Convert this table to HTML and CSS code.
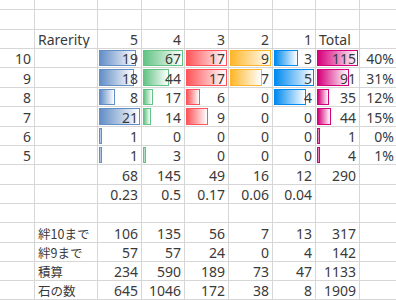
FILE: index.html
```html
<!DOCTYPE html>
<html lang="ja">
<head>
<meta charset="utf-8">
<link rel="stylesheet" href="styles.css">
</head>
<body>
<div class="sheet">
  <!-- row 0 -->
  <div class="c"></div><div class="c"></div><div class="c"></div><div class="c"></div><div class="c"></div><div class="c"></div><div class="c"></div><div class="c"></div><div class="c"></div>
  <!-- row 1 -->
  <div class="c"></div><div class="c"></div><div class="c"></div><div class="c"></div><div class="c"></div><div class="c"></div><div class="c"></div><div class="c"></div><div class="c"></div>
  <!-- header -->
  <div class="c"></div><div class="c l"><span>Rarerity</span></div><div class="c"><span>5</span></div><div class="c"><span>4</span></div><div class="c"><span>3</span></div><div class="c"><span>2</span></div><div class="c"><span>1</span></div><div class="c l"><span>Total</span></div><div class="c"></div>
  <!-- 10 -->
  <div class="c"><span>10</span></div><div class="c"></div>
  <div class="c"><i class="bar b5" style="width:86%"></i><span>19</span></div>
  <div class="c"><i class="bar b4" style="width:95%"></i><span>67</span></div>
  <div class="c"><i class="bar b3" style="width:95%"></i><span>17</span></div>
  <div class="c"><i class="bar b2" style="width:95%"></i><span>9</span></div>
  <div class="c"><i class="bar b1" style="width:57%"></i><span>3</span></div>
  <div class="c"><i class="bar bt" style="width:95%"></i><span>115</span></div>
  <div class="c"><span>40%</span></div>
  <!-- 9 -->
  <div class="c"><span>9</span></div><div class="c"></div>
  <div class="c"><i class="bar b5" style="width:81.4%"></i><span>18</span></div>
  <div class="c"><i class="bar b4" style="width:62.4%"></i><span>44</span></div>
  <div class="c"><i class="bar b3" style="width:95%"></i><span>17</span></div>
  <div class="c"><i class="bar b2" style="width:73.9%"></i><span>7</span></div>
  <div class="c"><i class="bar b1" style="width:95%"></i><span>5</span></div>
  <div class="c"><i class="bar bt" style="width:75.2%"></i><span>91</span></div>
  <div class="c"><span>31%</span></div>
  <!-- 8 -->
  <div class="c"><span>8</span></div><div class="c"></div>
  <div class="c"><i class="bar b5" style="width:36.2%"></i><span>8</span></div>
  <div class="c"><i class="bar b4" style="width:24.1%"></i><span>17</span></div>
  <div class="c"><i class="bar b3" style="width:33.5%"></i><span>6</span></div>
  <div class="c"><span>0</span></div>
  <div class="c"><i class="bar b1" style="width:76%"></i><span>4</span></div>
  <div class="c"><i class="bar bt" style="width:28.9%"></i><span>35</span></div>
  <div class="c"><span>12%</span></div>
  <!-- 7 -->
  <div class="c"><span>7</span></div><div class="c"></div>
  <div class="c"><i class="bar b5" style="width:95%"></i><span>21</span></div>
  <div class="c"><i class="bar b4" style="width:19.9%"></i><span>14</span></div>
  <div class="c"><i class="bar b3" style="width:50.3%"></i><span>9</span></div>
  <div class="c"><span>0</span></div>
  <div class="c"><span>0</span></div>
  <div class="c"><i class="bar bt" style="width:33.3%"></i><span>44</span></div>
  <div class="c"><span>15%</span></div>
  <!-- 6 -->
  <div class="c"><span>6</span></div><div class="c"></div>
  <div class="c"><i class="bar b5" style="width:4.5%"></i><span>1</span></div>
  <div class="c"><span>0</span></div>
  <div class="c"><span>0</span></div>
  <div class="c"><span>0</span></div>
  <div class="c"><span>0</span></div>
  <div class="c"><i class="bar bt" style="width:0.8%"></i><span>1</span></div>
  <div class="c"><span>0%</span></div>
  <!-- 5 -->
  <div class="c"><span>5</span></div><div class="c"></div>
  <div class="c"><i class="bar b5" style="width:4.5%"></i><span>1</span></div>
  <div class="c"><i class="bar b4" style="width:4.3%"></i><span>3</span></div>
  <div class="c"><span>0</span></div>
  <div class="c"><span>0</span></div>
  <div class="c"><span>0</span></div>
  <div class="c"><i class="bar bt" style="width:3.3%"></i><span>4</span></div>
  <div class="c"><span>1%</span></div>
  <!-- sums -->
  <div class="c"></div><div class="c"></div>
  <div class="c"><span>68</span></div><div class="c"><span>145</span></div><div class="c"><span>49</span></div><div class="c"><span>16</span></div><div class="c"><span>12</span></div><div class="c"><span>290</span></div><div class="c"></div>
  <!-- ratios -->
  <div class="c"></div><div class="c"></div>
  <div class="c"><span>0.23</span></div><div class="c"><span>0.5</span></div><div class="c"><span>0.17</span></div><div class="c"><span>0.06</span></div><div class="c"><span>0.04</span></div><div class="c"></div><div class="c"></div>
  <!-- blank -->
  <div class="c"></div><div class="c"></div><div class="c"></div><div class="c"></div><div class="c"></div><div class="c"></div><div class="c"></div><div class="c"></div><div class="c"></div>
  <!-- 絆10まで -->
  <div class="c"></div><div class="c l jp"><span>絆10まで</span></div>
  <div class="c"><span>106</span></div><div class="c"><span>135</span></div><div class="c"><span>56</span></div><div class="c"><span>7</span></div><div class="c"><span>13</span></div><div class="c"><span>317</span></div><div class="c"></div>
  <!-- 絆9まで -->
  <div class="c"></div><div class="c l jp"><span>絆9まで</span></div>
  <div class="c"><span>57</span></div><div class="c"><span>57</span></div><div class="c"><span>24</span></div><div class="c"><span>0</span></div><div class="c"><span>4</span></div><div class="c"><span>142</span></div><div class="c"></div>
  <!-- 積算 -->
  <div class="c"></div><div class="c l jp"><span>積算</span></div>
  <div class="c"><span>234</span></div><div class="c"><span>590</span></div><div class="c"><span>189</span></div><div class="c"><span>73</span></div><div class="c"><span>47</span></div><div class="c"><span>1133</span></div><div class="c"></div>
  <!-- 石の数 -->
  <div class="c"></div><div class="c l jp"><span>石の数</span></div>
  <div class="c"><span>645</span></div><div class="c"><span>1046</span></div><div class="c"><span>172</span></div><div class="c"><span>38</span></div><div class="c"><span>8</span></div><div class="c"><span>1909</span></div><div class="c"></div>
</div>
</body>
</html>
```
FILE: styles.css
```css
html, body {
  margin: 0;
  padding: 0;
  background: #ffffff;
  overflow: hidden;
}

.sheet {
  display: grid;
  grid-template-columns: 35px 63px 44px 43px 44px 44px 43px 44px 38px;
  grid-template-rows: 10px 20px 19px 19px 20px 19px 20px 19px 19px 20px 19px 19px 20px 19px 19px 19px;
  width: max-content;
  font-family: "Noto Sans", "Noto Sans CJK JP", sans-serif;
  font-size: 14px;
  color: #3a3a3a;
}

.c {
  box-sizing: border-box;
  position: relative;
  border-right: 1px solid #d6d6d6;
  border-bottom: 1px solid #d6d6d6;
  padding: 0 3px;
  display: flex;
  align-items: flex-end;
  justify-content: flex-end;
  white-space: nowrap;
  overflow: hidden;
}

.c span {
  position: relative;
  line-height: 17px;
}

.c.l {
  justify-content: flex-start;
}

.c.jp {
  font-family: "Noto Sans CJK JP", sans-serif;
  font-size: 12.5px;
}

.bar {
  position: absolute;
  left: 1px;
  top: 1px;
  bottom: 1px;
  min-width: 3px;
  box-sizing: border-box;
  border: 1px solid;
}

.b5 { border-color: #638ec6; background: linear-gradient(to right, #638ec6, #ffffff); }
.b4 { border-color: #63c384; background: linear-gradient(to right, #63c384, #ffffff); }
.b3 { border-color: #ff555a; background: linear-gradient(to right, #ff555a, #ffffff); }
.b2 { border-color: #ffb628; background: linear-gradient(to right, #ffb628, #ffffff); }
.b1 { border-color: #008aef; background: linear-gradient(to right, #008aef, #ffffff); }
.bt { border-color: #d6007b; background: linear-gradient(to right, #d6007b, #ffffff); }
```
